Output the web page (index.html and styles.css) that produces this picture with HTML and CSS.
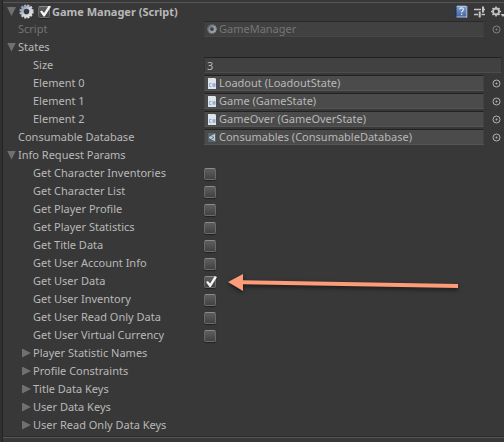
FILE: index.html
```
<!DOCTYPE html>
<html lang="en">
<head>
<meta charset="utf-8">
<title>Inspector</title>
<link rel="stylesheet" href="styles.css">
</head>
<body>
<svg class="defs" aria-hidden="true">
  <defs>
    <linearGradient id="steel" x1="0" y1="0" x2="1" y2="1">
      <stop offset="0" stop-color="#7f91ad"/><stop offset=".5" stop-color="#c9d1dc"/><stop offset="1" stop-color="#e4e4e4"/>
    </linearGradient>
    <linearGradient id="book" x1="0" y1="0" x2="0" y2="1">
      <stop offset="0" stop-color="#7fa0d2"/><stop offset="1" stop-color="#44659d"/>
    </linearGradient>
    <symbol id="gear" viewBox="0 0 16 16">
      <circle cx="8" cy="8" r="6.6" fill="none" stroke="url(#steel)" stroke-width="2" stroke-dasharray="2.2 1.256"/>
      <circle cx="8" cy="8" r="4.7" fill="none" stroke="url(#steel)" stroke-width="3.4"/>
    </symbol>
    <symbol id="script" viewBox="0 0 8 11">
      <path d="M0 0h7l1 1v10H0z" fill="#dfe4e8"/>
      <path d="M3.500 5.500H1.500v3h2M4.500 6.200h3M4.500 7.800h3M5.300 5.200v3.600M6.700 5.200v3.600" fill="none" stroke="#7fa0dc" stroke-width=".8"/>
    </symbol>
    <symbol id="asset" viewBox="0 0 8 11">
      <path d="M0 1h8v9H0z" fill="#56666f"/>
      <path d="M1 5.500 6.500 2.500v6zM1 5.500h3.500M4.500 5.500l2-3M4.500 5.500l2 3" fill="none" stroke="#c5d0d4" stroke-width="1"/>
    </symbol>
    <symbol id="target" viewBox="0 0 9 9">
      <circle cx="4.500" cy="4.500" r="3.500" fill="none" stroke="currentColor"/><circle cx="4.500" cy="4.500" r="1" fill="currentColor"/>
    </symbol>
  </defs>
</svg>
<main class="inspector">
  <header class="header">
    <button class="fold open" aria-label="Collapse component"></button>
    <svg class="gear"><use href="#gear"/></svg>
    <input class="check" type="checkbox" id="enabled" checked>
    <label for="enabled">Game Manager (Script)</label>
    <div class="tools">
      <button aria-label="Help"><svg width="13" height="13" viewBox="0 0 13 13"><path d="M1 1h10.500v11H1z" fill="url(#book)"/><path d="M1.500 1 0 2.500V12l1 .8h10l.5-.8H1.500z" fill="#1e3355"/><path d="M11.800 1v11.500M1.500 12h10.500M2 1.200h9" stroke="#c6d5ea" stroke-width=".9" fill="none"/><path d="M4.800 4.600c0-2.400 3.800-2.200 3.600.1C8.300 6 6.600 6 6.600 7.600M6.600 8.800v1.300" fill="none" stroke="#e2eaf6" stroke-width="1.200"/></svg></button>
      <button aria-label="Presets"><svg width="11" height="12" viewBox="0 0 11 12"><path d="M0 3.500h7M9 3.500h2M0 8.500h4M7.500 8.500H11" stroke="#c4c4c4" stroke-width="1.500"/><path d="M9 .5v6M5.700 5.500v6" stroke="#c4c4c4" stroke-width="2"/></svg></button>
      <button aria-label="Component menu"><svg width="13" height="12" viewBox="0 0 13 12"><circle cx="5" cy="5.500" r="3" fill="none" stroke="#c4c4c4" stroke-width="1.800"/><path d="M5 .5v2M5 8.500v2M0 5.500h2M8 5.500h2M1.500 2l1.400 1.400M7.100 7.600 8.500 9M1.500 9l1.400-1.400M7.100 3.400 8.500 2" stroke="#c4c4c4" stroke-width="1.600"/><path d="M9.500 8H13v1.500l-1 1.500z" fill="#c4c4c4"/></svg></button>
    </div>
  </header>

  <div class="row disabled"><span class="label">Script</span><button class="field object"><svg class="mini"><use href="#gear"/></svg>GameManager</button><button class="pick" aria-label="Select script"><svg><use href="#target"/></svg></button></div>
  <div class="row"><button class="fold open" aria-label="Collapse States"></button><span class="label">States</span></div>
  <div class="row nested"><label class="label" for="size">Size</label><input class="field number" id="size" type="text" value="3"></div>
  <div class="row nested"><span class="label">Element 0</span><button class="field object"><svg class="file"><use href="#script"/></svg>Loadout (LoadoutState)</button><button class="pick" aria-label="Select element 0"><svg><use href="#target"/></svg></button></div>
  <div class="row nested"><span class="label">Element 1</span><button class="field object"><svg class="file"><use href="#script"/></svg>Game (GameState)</button><button class="pick" aria-label="Select element 1"><svg><use href="#target"/></svg></button></div>
  <div class="row nested"><span class="label">Element 2</span><button class="field object"><svg class="file"><use href="#script"/></svg>GameOver (GameOverState)</button><button class="pick" aria-label="Select element 2"><svg><use href="#target"/></svg></button></div>
  <div class="row"><span class="label">Consumable Database</span><button class="field object"><svg class="file"><use href="#asset"/></svg>Consumables (ConsumableDatabase)</button><button class="pick" aria-label="Select database"><svg><use href="#target"/></svg></button></div>
  <div class="row"><button class="fold open" aria-label="Collapse Info Request Params"></button><span class="label">Info Request Params</span></div>

  <div class="row nested"><label class="label" for="t0">Get Character Inventories</label><input class="check" type="checkbox" id="t0"></div>
  <div class="row nested"><label class="label" for="t1">Get Character List</label><input class="check" type="checkbox" id="t1"></div>
  <div class="row nested"><label class="label" for="t2">Get Player Profile</label><input class="check" type="checkbox" id="t2"></div>
  <div class="row nested"><label class="label" for="t3">Get Player Statistics</label><input class="check" type="checkbox" id="t3"></div>
  <div class="row nested"><label class="label" for="t4">Get Title Data</label><input class="check" type="checkbox" id="t4"></div>
  <div class="row nested"><label class="label" for="t5">Get User Account Info</label><input class="check" type="checkbox" id="t5"></div>
  <div class="row nested"><label class="label" for="t6">Get User Data</label><input class="check" type="checkbox" id="t6" checked>
    <svg class="arrow" viewBox="0 0 232 22" aria-hidden="true"><path d="M0 8 15 0v6.200L230 10v4L15 10.200V17z" fill="#fc9c78"/></svg></div>
  <div class="row nested"><label class="label" for="t7">Get User Inventory</label><input class="check" type="checkbox" id="t7"></div>
  <div class="row nested"><label class="label" for="t8">Get User Read Only Data</label><input class="check" type="checkbox" id="t8"></div>
  <div class="row nested"><label class="label" for="t9">Get User Virtual Currency</label><input class="check" type="checkbox" id="t9"></div>

  <div class="row nested"><button class="fold" aria-label="Expand Player Statistic Names"></button><span class="label">Player Statistic Names</span></div>
  <div class="row nested"><button class="fold" aria-label="Expand Profile Constraints"></button><span class="label">Profile Constraints</span></div>
  <div class="row nested"><button class="fold" aria-label="Expand Title Data Keys"></button><span class="label">Title Data Keys</span></div>
  <div class="row nested"><button class="fold" aria-label="Expand User Data Keys"></button><span class="label">User Data Keys</span></div>
  <div class="row nested"><button class="fold" aria-label="Expand User Read Only Data Keys"></button><span class="label">User Read Only Data Keys</span></div>
</main>
</body>
</html>
```
FILE: styles.css
```
* { box-sizing: border-box; }
body {
  margin: 0;
  min-height: 100vh;
  display: flex;
  background: #383838;
  color: #b8b8b8;
  font: 11px/18px "Noto Sans", "Open Sans", sans-serif;
  border-left: 2px solid #303030;
  overflow-x: hidden;
}
button, input { margin: 0; padding: 0; border: 0; font: inherit; color: inherit; background: none; }
svg { display: block; flex: none; }
.defs { position: absolute; width: 0; height: 0; }

.inspector { flex: 1; min-width: 0; border-left: 1px solid #232323; padding-top: 2px; }
.inspector::before, .inspector::after { content: ""; display: block; height: 1px; background: #565656; }
.inspector::after { margin-top: 3px; box-shadow: 0 -1px #2b2b2b; }

.header { display: flex; align-items: center; height: 17px; padding-left: 4px; font-weight: 700; }
.gear { width: 15px; height: 15px; margin: 0 4px 0 3px; }
.header label { margin-left: 2px; white-space: nowrap; }
.tools { display: flex; align-items: center; gap: 6px; margin-left: auto; }

.row {
  display: grid;
  grid-template-columns: 201px minmax(0, 1fr) 20px;
  align-items: center;
  height: 18px;
  position: relative;
}
.label { grid-column: 1; grid-row: 1; padding-left: 15px; white-space: nowrap; }
.nested .label { padding-left: 30px; }

.fold { width: 9px; height: 9px; background: #707070; clip-path: polygon(0 0, 100% 50%, 0 100%); }
.fold.open { clip-path: polygon(0 0, 100% 0, 50% 100%); }
.row .fold { grid-column: 1; grid-row: 1; margin-left: 4px; }
.nested .fold { margin-left: 19px; }

.field { height: 16px; background: #4b4b4b; border: 1px solid #424242; border-top-color: #222; border-bottom-color: #555; line-height: 14px; }
.object { display: flex; align-items: center; gap: 3px; padding-left: 3px; text-align: left; white-space: nowrap; }
.number { grid-column: 2 / 4; margin-right: 2px; padding-left: 2px; background: #414141; border-color: #222 #333 #4c4c4c; }
.file { width: 8px; height: 11px; }
.mini { width: 10px; height: 10px; margin: 0 -1px; }
.pick { justify-self: end; margin-right: 3px; }
.pick svg { width: 9px; height: 9px; color: #b4b4b4; }
.disabled { color: #747474; }
.disabled .field { background: #414141; border-color: #2a2a2a #3d3d3d #484848; }
.disabled svg { opacity: .6; }

.check {
  appearance: none;
  width: 12px;
  height: 12px;
  border: 1px solid #6a6a6a;
  border-top-color: #898989;
  border-radius: 2px;
  background: linear-gradient(#5e5e5e, #424242);
  box-shadow: 0 1px 1px #222;
  position: relative;
}
.row .check { margin-top: 2px; }
.check:checked::after {
  content: "";
  position: absolute;
  inset: -1px -2px 0 1px;
  background: #f4f4f4;
  clip-path: polygon(0 55%, 18% 45%, 37% 68%, 80% 0, 100% 8%, 43% 100%, 32% 100%);
}
.arrow { position: absolute; left: 225px; top: 2px; width: 232px; height: 22px; overflow: visible; filter: drop-shadow(0 2px 2px #181818); z-index: 1; pointer-events: none; }
```
